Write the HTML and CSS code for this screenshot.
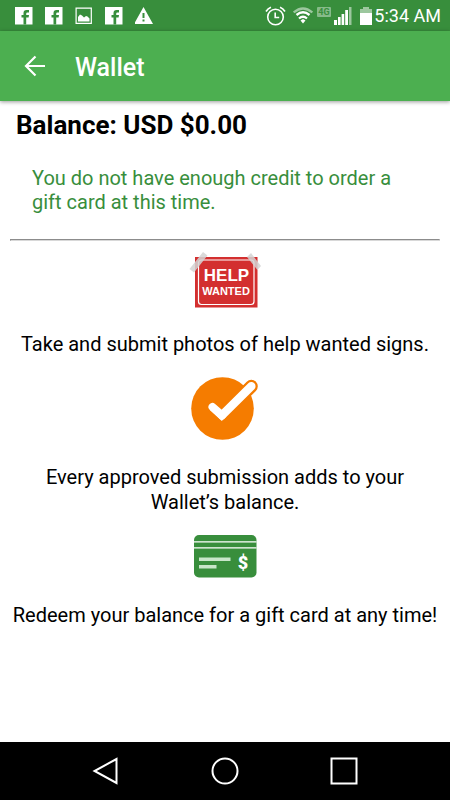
FILE: index.html
```html
<!DOCTYPE html>
<html lang="en">
<head>
<meta charset="utf-8">
<meta name="viewport" content="width=device-width, initial-scale=1">
<title>Wallet</title>
<link rel="stylesheet" href="styles.css">
</head>
<body>
<div class="status-bar">
  <div class="notifications">
    <svg width="18" height="18" viewBox="0 0 18 18" aria-hidden="true"><path fill="#fff" d="M0 0h17.500v17.500H0z"/><path fill="#388e3c" d="M8.500 17.500V10.500H6.500V8h2V6q0-3 3-3H14v2.500h-1.500q-1.300 0-1.300 1.200V8H14l-.4 2.500h-2.400v7z"/></svg>
    <svg width="18" height="18" viewBox="0 0 18 18" aria-hidden="true"><path fill="#fff" d="M0 0h17.500v17.500H0z"/><path fill="#388e3c" d="M8.500 17.500V10.500H6.500V8h2V6q0-3 3-3H14v2.500h-1.500q-1.300 0-1.300 1.200V8H14l-.4 2.500h-2.400v7z"/></svg>
    <svg width="18" height="18" viewBox="0 0 18 18" aria-hidden="true"><path fill="none" stroke="#fff" stroke-width="1.200" d="M1.100 1.100h15.200v15.200H1.100z"/><path fill="#fff" d="M3 14.500V10l2-2.500 2 1 2 2 2-1.500 1.500.5 2 2v3z"/></svg>
    <svg width="18" height="18" viewBox="0 0 18 18" aria-hidden="true"><path fill="#fff" d="M0 0h17.500v17.500H0z"/><path fill="#388e3c" d="M8.500 17.500V10.500H6.500V8h2V6q0-3 3-3H14v2.500h-1.500q-1.300 0-1.300 1.200V8H14l-.4 2.500h-2.400v7z"/></svg>
    <svg width="20" height="18" viewBox="0 0 20 18" aria-hidden="true"><path fill="#fff" fill-rule="evenodd" d="M8.500 0 18 17H-1zM7.500 6v5h2V6zm0 6.500v2h2v-2z"/></svg>
  </div>
  <div class="system">
    <svg width="21" height="20" viewBox="0 0 21 20" aria-hidden="true"><g fill="none" stroke="#fff" stroke-width="1.600"><circle cx="10.500" cy="11" r="7.800"/><path d="M10.200 6.500v5h4M1 5.500Q3 2.200 6 1.200M20 5.500Q18 2.200 15 1.200"/></g></svg>
    <svg class="wifi" width="20" height="17" viewBox="0 0 20 17" aria-hidden="true"><g fill="none" stroke="#fff" stroke-width="2.300"><path opacity=".5" d="M.7 5.500Q10-2.500 19.300 5.500"/><path d="M3.500 8q6.500-5.500 13 0M6 11.500q4-3.500 8 0"/></g><path fill="#fff" d="m7.500 13.500 2.500-1.500 2.500 1.500-2.500 3z"/></svg>
    <svg class="network" width="14" height="10" viewBox="0 0 14 10" role="img" aria-label="4G"><rect width="14" height="10" rx="1" fill="#86bb89"/><text x="7" y="8" fill="#388e3c" font-family="Roboto, sans-serif" font-size="9" font-weight="700" text-anchor="middle">4G</text></svg>
    <svg class="signal" width="18" height="18" viewBox="0 0 18 18" aria-hidden="true"><path fill="#fff" d="M0 13h3v5H0zM4 10h2.600v8H4zM7.600 7h2.600v11H7.600zM11.200 3h2.800v15h-2.800z"/><path fill="#fff" opacity=".5" d="M15 0h2.500v18H15z"/></svg>
    <svg class="battery" width="12" height="18" viewBox="0 0 12 18" aria-hidden="true"><path fill="#fff" opacity=".5" d="M3 0h6v2h3v4H0V2h3z"/><path fill="#fff" d="M0 6h12v12H0z"/></svg>
    <time class="clock">5:34 AM</time>
  </div>
</div>
<header class="app-bar">
  <button class="back" type="button" aria-label="Back"><svg width="22" height="22" viewBox="0 0 22 22"><path fill="none" stroke="#fff" stroke-width="2.200" d="M21 11H2.500M11.500 1.500 2 11l9.500 9.500"/></svg></button>
  <span class="title">Wallet</span>
</header>
<main class="content">
  <h1 class="balance">Balance: USD $0.00</h1>
  <p class="notice">You do not have enough credit to order a gift card at this time.</p>
  <hr class="rule">
  <section class="step">
    <svg class="picture" width="72" height="56" viewBox="0 0 72 56" aria-hidden="true">
      <path fill="#d32f2f" d="M6 5h62.500v50.500H6z"/>
      <rect x="9.500" y="8" width="55.500" height="44.500" rx="3" fill="none" stroke="#fff" stroke-width="1.200"/>
      <path fill="#d4d4d4" opacity=".85" d="M14 0l4.500 3.500L5 20.500.5 17zM62 1l-4 4 10.500 13 3.500-4z"/>
      <g fill="#fff" font-family="Liberation Sans, sans-serif" font-weight="bold" text-anchor="middle"><text x="37.500" y="29" font-size="17">HELP</text><text x="37" y="43" font-size="11">WANTED</text></g>
    </svg>
    <p class="caption">Take and submit photos of help wanted signs.</p>
  </section>
  <section class="step">
    <svg class="picture" width="72" height="64" viewBox="0 0 72 64" aria-hidden="true">
      <circle cx="33.500" cy="31.500" r="31.300" fill="#f57c00"/>
      <path fill="none" stroke="#f57c00" stroke-width="13" stroke-linecap="round" d="M45 26.500 62.300 9.300"/>
      <path fill="none" stroke="#fff" stroke-width="8.500" stroke-linecap="round" d="M33 38.300 62.300 9.300"/>
      <path fill="none" stroke="#fff" stroke-width="8" stroke-linecap="round" d="m23.500 30 9.500 8.300"/>
      <path fill="#fff" d="m20.900 33 11.900 11L38 38.500 33 33z"/>
    </svg>
    <p class="caption">Every approved submission adds to your Wallet’s balance.</p>
  </section>
  <section class="step">
    <svg class="picture" width="72" height="44" viewBox="0 0 72 44" aria-hidden="true">
      <rect x="5" y="0" width="62.500" height="42.500" rx="5" fill="#388e3c"/>
      <path fill="#fff" d="M5 6.300h62.500v1.300H5zM5 12.300h62.500v1.300H5z"/>
      <path fill="#c8e6c9" d="M10 22.500h31.500V26H10zM10 30h17.500v3.500H10z"/>
      <text x="54" y="34" fill="#fff" font-family="Roboto, sans-serif" font-size="18" font-weight="900" text-anchor="middle">$</text>
    </svg>
    <p class="caption">Redeem your balance for a gift card at any time!</p>
  </section>
</main>
<nav class="nav-bar" aria-label="System">
  <button type="button" aria-label="Back"><svg width="28" height="28" viewBox="0 0 28 28"><path d="M24.500 2v24L2.500 14z"/></svg></button>
  <button type="button" aria-label="Home"><svg width="28" height="28" viewBox="0 0 28 28"><circle cx="14" cy="14" r="12.500"/></svg></button>
  <button type="button" aria-label="Recent apps"><svg width="28" height="28" viewBox="0 0 28 28"><path d="M1.500 1.500h25v25h-25z"/></svg></button>
</nav>
</body>
</html>
```
FILE: styles.css
```css
* {
  box-sizing: border-box;
}

body {
  margin: 0;
  min-height: 100vh;
  display: flex;
  flex-direction: column;
  background: #fff;
  color: #000;
  font-family: Roboto, sans-serif;
}

svg {
  display: block;
  flex: none;
}

button {
  padding: 0;
  border: 0;
  background: none;
}

.status-bar {
  display: flex;
  justify-content: space-between;
  align-items: center;
  height: 31px;
  padding: 0 9px 0 15px;
  background: #388e3c;
  color: #fff;
}

.notifications {
  display: flex;
  gap: 12px;
}

.system {
  display: flex;
  align-items: center;
}

.wifi {
  margin-left: 7px;
}

.network {
  align-self: flex-start;
  margin: 3px 3px 0 4px;
}

.battery {
  margin: 0 2px 0 8px;
}

.clock {
  font-size: 18px;
  line-height: 24px;
}

.app-bar {
  display: flex;
  align-items: center;
  gap: 29px;
  height: 70px;
  padding: 0 24px;
  background: #4caf50;
  box-shadow: 0 1px 4px rgba(0, 0, 0, 0.4);
  color: #fff;
}

.title {
  padding-top: 4px;
  font-size: 25px;
  font-weight: 500;
  line-height: 32px;
}

.content {
  flex: 1;
  padding: 8px 10px;
}

.balance {
  margin: 0 6px;
  font-size: 26px;
  font-weight: 700;
  line-height: 32px;
}

.notice {
  margin: 25px 22px;
  color: #388e3c;
  font-size: 20px;
  line-height: 24px;
}

.rule {
  margin: 0;
  border: 1px solid;
  border-color: #8c8c8c #d8d8d8 #d8d8d8 #8c8c8c;
}

.step {
  padding-top: 11px;
  text-align: center;
}

.step + .step {
  padding-top: 20px;
}

.picture {
  margin: 0 auto;
}

.caption {
  margin: 24px 0 0;
  font-size: 20px;
  line-height: 25px;
}

.nav-bar {
  display: flex;
  justify-content: center;
  align-items: center;
  gap: 91px;
  height: 58px;
  background: #000;
}

.nav-bar svg {
  fill: none;
  stroke: #fff;
  stroke-width: 2;
}
```
